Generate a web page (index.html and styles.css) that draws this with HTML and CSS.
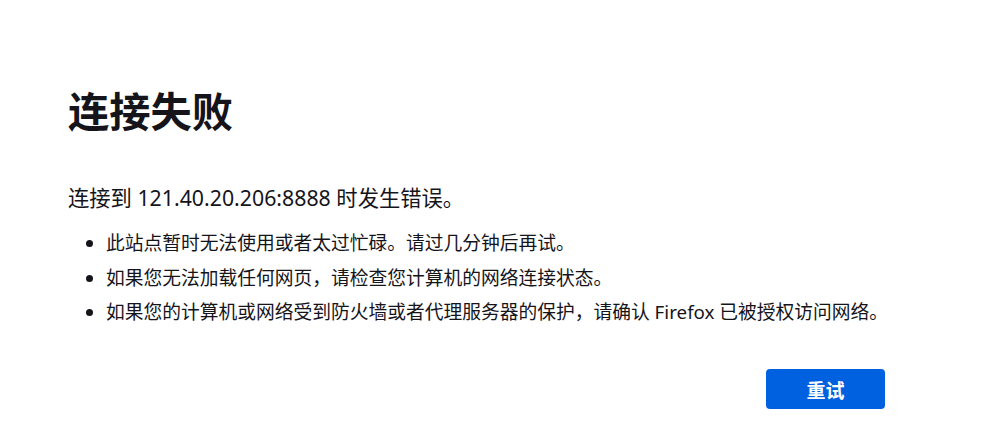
FILE: index.html
```html
<!DOCTYPE html>
<html lang="zh-CN">
<head>
<meta charset="utf-8">
<title>连接失败</title>
<link rel="stylesheet" href="styles.css">
</head>
<body>
<main class="container">
  <h1 class="title">连接失败</h1>
  <p class="short-desc">连接到 121.40.20.206:8888 时发生错误。</p>
  <ul class="long-desc">
    <li>此站点暂时无法使用或者太过忙碌。请过几分钟后再试。</li>
    <li>如果您无法加载任何网页，请检查您计算机的网络连接状态。</li>
    <li>如果您的计算机或网络受到防火墙或者代理服务器的保护，请确认 Firefox 已被授权访问网络。</li>
  </ul>
  <div class="actions">
    <button class="retry">重试</button>
  </div>
</main>
</body>
</html>
```

FILE: styles.css
```css
html, body {
  margin: 0;
  padding: 0;
  background: #ffffff;
}

body {
  font-family: "Noto Sans", "Noto Sans CJK SC", sans-serif;
  font-size: 18.75px;
  color: #15141a;
}

.container {
  width: 817px;
  padding: 87px 0 0 68px;
  box-sizing: content-box;
}

.title {
  margin: 0;
  font-size: 41.25px;
  line-height: 49.5px;
  font-weight: 700;
}

.short-desc {
  margin: 47px 0 0;
  font-size: 21.3px;
  line-height: 27px;
}

.long-desc {
  margin: 19.5px 0 0;
  padding: 0 0 0 38px;
  line-height: 26.25px;
}

.long-desc li {
  margin: 0 0 8.25px;
  white-space: nowrap;
}

.long-desc li:last-child {
  margin-bottom: 0;
}

.actions {
  display: flex;
  justify-content: flex-end;
  margin-top: 44px;
}

.retry {
  width: 119px;
  height: 40px;
  border: none;
  border-radius: 4px;
  background: #0061e0;
  color: #ffffff;
  font-family: "Noto Sans CJK SC", sans-serif;
  font-size: 19px;
  font-weight: 700;
  padding: 0;
}
```
